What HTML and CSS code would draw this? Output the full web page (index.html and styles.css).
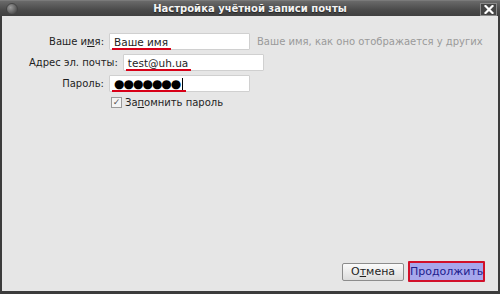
FILE: index.html
```html
<!DOCTYPE html>
<html lang="ru">
<head>
    <meta charset="UTF-8">
    <title>Настройка учётной записи почты</title>
    <link rel="stylesheet" href="styles.css">
</head>
<body>

    <div class="window">
        <!-- Заголовок окна -->
        <div class="titlebar">
            <span class="menu-dot"></span>
            <span class="title">Настройка учётной записи почты</span>
            <span class="close">
                <svg width="10" height="9" viewBox="0 0 10 9">
                    <path d="M1.5 1 L8.5 8 M8.5 1 L1.5 8" stroke="#fff" stroke-width="2.2" stroke-linecap="square"/>
                </svg>
            </span>
        </div>

        <div class="content">
            <div class="form">
                <div class="row">
                    <label class="label">Ваше и<u>м</u>я:</label>
                    <div class="input"><span class="mark">Ваше имя</span></div>
                    <span class="hint">Ваше имя, как оно отображается у других</span>
                </div>
                <div class="row">
                    <label class="label">Адрес эл. почты:</label>
                    <div class="input"><span class="mark">test@uh.ua</span></div>
                </div>
                <div class="row">
                    <label class="label">Пароль:</label>
                    <div class="input"><span class="mark dots">●●●●●●●<i class="caret"></i></span></div>
                </div>
                <div class="check-row">
                    <span class="checkbox">✓</span>
                    <span>За<u>п</u>омнить пароль</span>
                </div>
            </div>

            <div class="buttons">
                <button class="btn">О<u>т</u>мена</button>
                <button class="btn primary">Продолжить</button>
            </div>
        </div>
    </div>

</body>
</html>
```

FILE: styles.css
```css
body {
    margin: 0;
    font-family: "DejaVu Sans", sans-serif;
    font-size: 10px;
    color: #1e1e1e;
}
.window {
    width: 500px;
    height: 294px;
    display: flex;
    flex-direction: column;
    background: #3c3c3c;
}

/* Заголовок */
.titlebar {
    height: 16px;
    position: relative;
    display: flex;
    align-items: center;
    justify-content: center;
    background: linear-gradient(#6a6a6a, #4a4a4a 60%, #404040);
    border-top: 1px solid #7a7a7a;
    box-sizing: border-box;
}
.title {
    color: #f4f4f4;
    font-weight: bold;
    font-size: 10px;
    text-shadow: 0 1px 1px #222;
}
.menu-dot {
    position: absolute;
    left: 6px;
    top: 2px;
    width: 10px;
    height: 10px;
    border-radius: 50%;
    background: radial-gradient(circle at 35% 35%, #9a9a9a, #555 70%);
    border: 1px solid #444;
}
.close {
    position: absolute;
    right: 3px;
    top: 2px;
    width: 15px;
    height: 11px;
    border: 1px solid #8a8a8a;
    background: #454545;
    display: flex;
    align-items: center;
    justify-content: center;
}

/* Содержимое */
.content {
    flex: 1;
    margin: 0 2px 3px 2px;
    background: #e6e6e6;
    display: flex;
    flex-direction: column;
}
.form {
    padding: 17px 0 0 27px;
    display: flex;
    flex-direction: column;
    gap: 4px;
}
.row {
    display: flex;
    align-items: center;
}
.label {
    min-width: 75px;
    text-align: right;
    margin-right: 5px;
    white-space: nowrap;
}
.input {
    width: 137px;
    height: 15px;
    background: #fff;
    border: 1px solid #d0d0d0;
    border-radius: 1px;
    display: flex;
    align-items: center;
    padding-left: 2px;
    font-size: 10.5px;
}
.hint {
    margin-left: 7px;
    color: #9a9a9a;
    white-space: nowrap;
}
.mark {
    padding: 0 3px 0 2px;
    border-bottom: 2px solid #d80018;
    line-height: 12px;
    margin-top: 2px;
}
.dots {
    font-size: 12px;
    color: #000;
    letter-spacing: -1px;
    display: flex;
    align-items: center;
}
.caret {
    display: inline-block;
    width: 1px;
    height: 12px;
    background: #000;
    margin-left: 2px;
}
.check-row {
    display: flex;
    align-items: center;
    gap: 3px;
    margin-left: 82px;
    margin-top: 1px;
}
.checkbox {
    width: 9px;
    height: 9px;
    border: 1px solid #9a9a9a;
    background: #f4f4f4;
    font-size: 9px;
    line-height: 9px;
    text-align: center;
    color: #555;
}

/* Кнопки */
.buttons {
    margin-top: auto;
    display: flex;
    justify-content: flex-end;
    align-items: center;
    gap: 4px;
    padding: 0 13px 9px 0;
}
.btn {
    font-family: "DejaVu Sans", sans-serif;
    font-size: 11px;
    height: 18px;
    padding: 0 8px;
    border: 1px solid #8c8c8c;
    border-radius: 2px;
    background: linear-gradient(#fbfbfb, #dcdcdc);
    color: #1e1e1e;
    width: 62px;
}
.btn.primary {
    width: 77px;
    height: 21px;
    border: 2px solid #d2102a;
    border-radius: 1px;
    background: #a7a7ec;
    color: #20208c;
    padding: 0;
}
```
